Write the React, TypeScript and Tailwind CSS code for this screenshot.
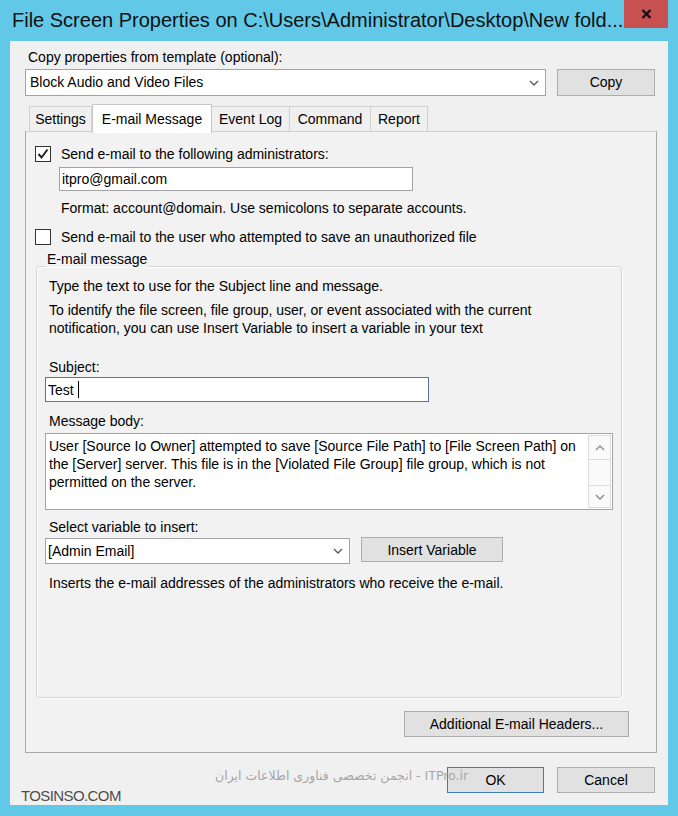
import React from 'react';

const Chevron: React.FC<{ up?: boolean; className?: string }> = ({ up, className }) => (
  <svg width="10" height="6" viewBox="0 0 10 6" className={className}>
    <polyline
      points={up ? '1,5 5,1 9,5' : '1,1 5,5 9,1'}
      fill="none"
      stroke="currentColor"
      strokeWidth="1.3"
    />
  </svg>
);

const Checkbox: React.FC<{ checked?: boolean }> = ({ checked }) => (
  <div className="w-[16px] h-[16px] border border-[#333] bg-white flex items-center justify-center shrink-0">
    {checked && (
      <svg width="12" height="12" viewBox="0 0 12 12">
        <polyline points="1.5,6 4.5,9.5 10.5,1.5" fill="none" stroke="#222" strokeWidth="2" />
      </svg>
    )}
  </div>
);

const Button: React.FC<{ label: string; className?: string }> = ({ label, className = '' }) => (
  <div
    className={`bg-[#e1e1e1] border border-[#adadad] flex items-center justify-center text-[14px] text-black ${className}`}
  >
    {label}
  </div>
);

const App: React.FC = () => {
  return (
    <div className="w-[678px] h-[816px] bg-[#61c8e8] relative overflow-hidden font-['Liberation_Sans',Arial,sans-serif] text-black">
      {/* title bar */}
      <div className="h-[41px] flex justify-between">
        <div className="pl-[12px] pt-[7px] text-[20px] leading-[26px] text-[#111] whitespace-nowrap">
          File Screen Properties on C:\Users\Administrator\Desktop\New fold...
        </div>
        <div className="w-[44px] h-[28px] mr-[10px] bg-[#c75050] flex items-center justify-center">
          <svg width="11" height="10" viewBox="0 0 11 10">
            <path d="M1.5 1 L9.5 9 M9.5 1 L1.5 9" stroke="#111" strokeWidth="2.4" />
          </svg>
        </div>
      </div>

      {/* client area */}
      <div className="mx-[10px] h-[764px] bg-[#f0f0f0] flex flex-col relative">
        <div className="pl-[18px] pt-[8px] text-[14px] leading-[17px]">Copy properties from template (optional):</div>

        <div className="flex ml-[15px] mt-[3px] gap-[11px]">
          <div className="w-[521px] h-[27px] bg-white border border-[#a3a3a3] flex items-center justify-between pl-[4px] pr-[6px] text-[14px]">
            <span>Block Audio and Video Files</span>
            <Chevron className="text-[#555]" />
          </div>
          <Button label="Copy" className="w-[98px] h-[27px]" />
        </div>

        {/* tabs */}
        <div className="flex items-end ml-[19px] mt-[8px] h-[27px] relative z-10 text-[14px]">
          <div className="w-[63px] h-[25px] border border-b-0 border-[#d0d0d0] bg-[#f0f0f0] flex items-center justify-center pt-[1px]">Settings</div>
          <div className="w-[120px] h-[29px] mb-[-2px] border border-b-0 border-[#c8c8c8] bg-white flex items-start pt-[4px] justify-center">E-mail Message</div>
          <div className="w-[78px] h-[25px] border border-b-0 border-l-0 border-[#d0d0d0] bg-[#f0f0f0] flex items-center justify-center pt-[1px]">Event Log</div>
          <div className="w-[81px] h-[25px] border border-b-0 border-l-0 border-[#d0d0d0] bg-[#f0f0f0] flex items-center justify-center pt-[1px]">Command</div>
          <div className="w-[57px] h-[25px] border border-b-0 border-l-0 border-[#d0d0d0] bg-[#f0f0f0] flex items-center justify-center pt-[1px]">Report</div>
        </div>

        {/* tab panel */}
        <div className="ml-[15px] w-[632px] h-[622px] border border-[#a9a9a9] border-t-[#d0d0d0] bg-[#f2f2f2] flex flex-col text-[14px] leading-[16px]">
          <div className="flex items-center mt-[14px] ml-[9px] gap-[10px]">
            <Checkbox checked />
            <span>Send e-mail to the following administrators:</span>
          </div>
          <div className="ml-[33px] mt-[5px] w-[354px] h-[24px] bg-white border border-[#a3a3a3] flex items-center pl-[2px]">
            itpro@gmail.com
          </div>
          <div className="ml-[35px] mt-[9px]">Format: account@domain. Use semicolons to separate accounts.</div>

          <div className="flex items-center mt-[13px] ml-[9px] gap-[10px]">
            <Checkbox />
            <span>Send e-mail to the user who attempted to save an unauthorized file</span>
          </div>

          {/* group box */}
          <div className="relative z-10 ml-[20px] mt-[6px] w-fit px-[1px] bg-[#f2f2f2]">E-mail message</div>
          <div className="ml-[10px] mt-[-1px] w-[586px] h-[432px] border border-[#d5d5d5] rounded-[3px] shadow-[inset_1px_1px_0_#ffffff,1px_1px_0_#ffffff] flex flex-col pl-[8px]">
            <div className="ml-[4px] mt-[11px]">Type the text to use for the Subject line and message.</div>
            <div className="ml-[4px] mt-[7px] leading-[18px] w-[530px]">
              To identify the file screen, file group, user, or event associated with the current notification, you can use Insert Variable to insert a variable in your text
            </div>
            <div className="ml-[4px] mt-[22px]">Subject:</div>
            <div className="mt-[2px] w-[384px] h-[25px] bg-white border border-[#56769e] flex items-center pl-[2px]">
              <span>Test</span>
              <span className="ml-[4px] w-[1px] h-[17px] bg-black" />
            </div>
            <div className="ml-[4px] mt-[11px]">Message body:</div>
            <div className="mt-[4px] w-[568px] h-[77px] bg-white border border-[#a3a3a3] flex">
              <div className="flex-1 pl-[3px] pt-[3px] pr-[4px] leading-[18px]">
                User [Source Io Owner] attempted to save [Source File Path] to [File Screen Path] on the [Server] server. This file is in the [Violated File Group] file group, which is not permitted on the server.
              </div>
              <div className="w-[23px] flex flex-col my-[1px] mr-[1px] border border-[#dcdcdc] bg-[#fafafa]">
                <div className="h-[24px] border-b border-[#dcdcdc] flex items-center justify-center text-[#8a8a8a]">
                  <Chevron up />
                </div>
                <div className="flex-1" />
                <div className="h-[22px] border-t border-[#dcdcdc] flex items-center justify-center text-[#8a8a8a]">
                  <Chevron />
                </div>
              </div>
            </div>
            <div className="ml-[4px] mt-[9px]">Select variable to insert:</div>
            <div className="flex mt-[2px] gap-[11px] items-start">
              <div className="mt-[1px] w-[305px] h-[26px] bg-white border border-[#a3a3a3] flex items-center justify-between pl-[2px] pr-[6px]">
                <span>[Admin Email]</span>
                <Chevron className="text-[#555]" />
              </div>
              <Button label="Insert Variable" className="w-[142px] h-[25px]" />
            </div>
            <div className="ml-[4px] mt-[11px]">Inserts the e-mail addresses of the administrators who receive the e-mail.</div>
          </div>

          <Button label="Additional E-mail Headers..." className="self-end mr-[27px] mt-[13px] w-[225px] h-[26px]" />
        </div>

        {/* dialog buttons */}
        <div className="flex justify-end mr-[13px] mt-[14px] gap-[13px]">
          <Button label="OK" className="w-[97px] h-[26px] !border-[#3c7fb1]" />
          <Button label="Cancel" className="w-[98px] h-[26px]" />
        </div>

        {/* watermarks */}
        <div className="absolute left-[205px] top-[726px] text-[12.5px] text-[#a6a6a6] font-['DejaVu_Sans',sans-serif] whitespace-nowrap">
          انجمن تخصصی فناوری اطلاعات ایران - ITPro.ir
        </div>
        <div className="absolute left-[11px] top-[744px] text-[15px] text-[#4a4a4a] tracking-[-0.6px] [text-shadow:0_0_1px_#fff]">
          TOSINSO.COM
        </div>
      </div>
    </div>
  );
};

export default App;
